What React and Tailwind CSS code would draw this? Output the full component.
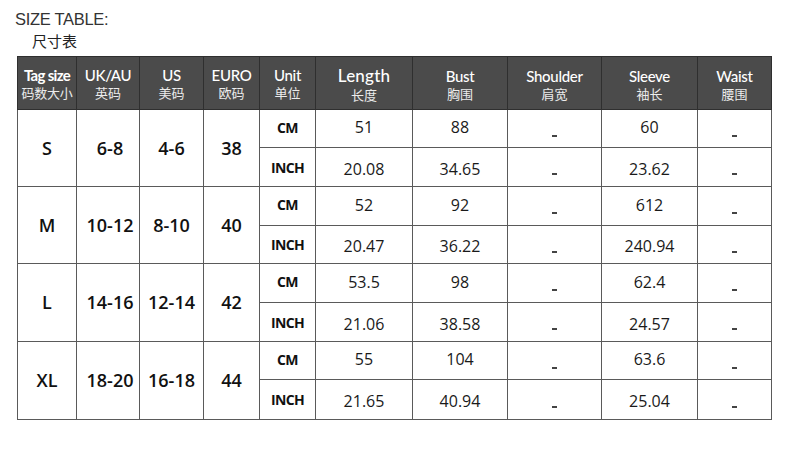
const columns = [
  { en: 'Tag size', zh: '码数大小', tight: true },
  { en: 'UK/AU', zh: '英码' },
  { en: 'US', zh: '美码' },
  { en: 'EURO', zh: '欧码' },
  { en: 'Unit', zh: '单位' },
  { en: 'Length', zh: '长度', big: true, huge: true },
  { en: 'Bust', zh: '胸围', big: true },
  { en: 'Shoulder', zh: '肩宽', big: true },
  { en: 'Sleeve', zh: '袖长', big: true },
  { en: 'Waist', zh: '腰围', big: true },
];

const sizes = [
  { tag: 'S', uk: '6-8', us: '4-6', eu: '38', cm: ['51', '88', '60'], inch: ['20.08', '34.65', '23.62'] },
  { tag: 'M', uk: '10-12', us: '8-10', eu: '40', cm: ['52', '92', '612'], inch: ['20.47', '36.22', '240.94'] },
  { tag: 'L', uk: '14-16', us: '12-14', eu: '42', cm: ['53.5', '98', '62.4'], inch: ['21.06', '38.58', '24.57'] },
  { tag: 'XL', uk: '18-20', us: '16-18', eu: '44', cm: ['55', '104', '63.6'], inch: ['21.65', '40.94', '25.04'] },
];

const gridCols = 'grid-cols-[58px_62px_63px_55px_55px_96px_94px_93px_95px_73px]';
const rowHeights = [
  ['h-[37px]', 'h-[38px]'],
  ['h-[38px]', 'h-[37px]'],
  ['h-[38px]', 'h-[38px]'],
  ['h-[37px]', 'h-[39px]'],
];

const numFont = { fontFamily: '"Open Sans", "Noto Sans", sans-serif' };

function Dash() {
  return <span className="mt-[14px] block h-[2px] w-[5px] bg-[#444]" />;
}

function MeasureRow({ unit, values, h, top }) {
  const shift = top ? 'pb-[3px]' : 'pt-[3px]';
  return (
    <>
      <div className={`${h} flex items-center justify-center bg-white text-[14px] font-bold tracking-[-0.6px] text-[#111] ${top ? 'pb-[3px]' : ''}`}>
        {unit}
      </div>
      <div className={`${h} flex items-center justify-center bg-white text-[16px] text-[#1a1a1a] ${shift}`}>{values[0]}</div>
      <div className={`${h} flex items-center justify-center bg-white text-[16px] text-[#1a1a1a] ${shift}`}>{values[1]}</div>
      <div className={`${h} flex items-center justify-center bg-white`}><Dash /></div>
      <div className={`${h} flex items-center justify-center bg-white text-[16px] text-[#1a1a1a] ${shift}`}>{values[2]}</div>
      <div className={`${h} flex items-center justify-center bg-white`}><Dash /></div>
    </>
  );
}

export default function App() {
  return (
    <div className="h-[473px] w-[790px] bg-white" style={{ fontFamily: '"Noto Sans CJK SC", sans-serif' }}>
      <div className="pl-[15px] pt-[9px] text-[16.5px] font-light leading-[20px] tracking-[-0.3px] text-[#333]" style={{ fontFamily: '"Liberation Sans", "Noto Sans CJK SC", sans-serif' }}>
        SIZE TABLE:
      </div>
      <div className="pl-[32px] pt-[2px] text-[15px] leading-[20px] text-[#222]">尺寸表</div>

      <div className="ml-[17px] mt-[5px] w-[755px]">
        <div className={`grid ${gridCols} gap-px border border-[#2f2f2f] bg-[#2f2f2f]`}>
          {columns.map((c) => (
            <div
              key={c.en}
              className={`flex h-[52px] flex-col items-center justify-center bg-[#4b4b4b] text-white ${c.big ? 'pt-[2px]' : ''}`}
            >
              <span
                className={`${c.tight ? 'text-[15px] leading-[18px] font-bold tracking-[-0.7px]' : c.huge ? 'text-[17px] leading-[20px] font-medium tracking-[0.2px]' : 'text-[15px] leading-[18px] font-medium tracking-[-0.3px]'}`}
                style={{ fontFamily: 'Lato, "Noto Sans", sans-serif' }}
              >
                {c.en}
              </span>
              <span className={`mt-[1px] text-[13px] leading-[16px] text-[#ececec] ${c.tight ? 'tracking-[-0.3px]' : ''}`}>{c.zh}</span>
            </div>
          ))}
        </div>

        <div className={`grid ${gridCols} gap-px border border-t-0 border-[#5a5a5a] bg-[#5a5a5a]`} style={numFont}>
          {sizes.map((s, i) => (
            <div key={s.tag} className="contents">
              <div className="row-span-2 flex items-center justify-center bg-white text-[18px] font-semibold text-[#111]">{s.tag}</div>
              <div className="row-span-2 flex items-center justify-center bg-white pl-1 text-[18px] font-semibold text-[#111]">{s.uk}</div>
              <div className="row-span-2 flex items-center justify-center bg-white text-[18px] font-semibold text-[#111]">{s.us}</div>
              <div className="row-span-2 flex items-center justify-center bg-white text-[18px] font-semibold text-[#111]">{s.eu}</div>
              <MeasureRow unit="CM" values={s.cm} h={rowHeights[i][0]} top />
              <MeasureRow unit="INCH" values={s.inch} h={rowHeights[i][1]} />
            </div>
          ))}
        </div>
      </div>
    </div>
  );
}
